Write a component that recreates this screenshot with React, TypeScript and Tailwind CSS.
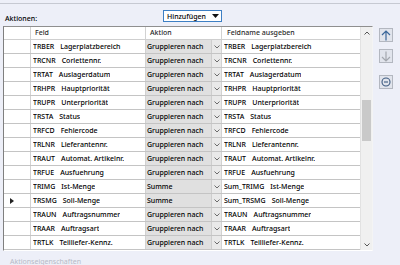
import React from 'react';

type Row = {
  feld: [string, string];
  aktion: string;
  ausgabe: [string, string];
  current?: boolean;
};

const rows: Row[] = [
  { feld: ['TRBER', 'Lagerplatzbereich'], aktion: 'Gruppieren nach', ausgabe: ['TRBER', 'Lagerplatzbereich'] },
  { feld: ['TRCNR', 'Corlettennr.'], aktion: 'Gruppieren nach', ausgabe: ['TRCNR', 'Corlettennr.'] },
  { feld: ['TRTAT', 'Auslagerdatum'], aktion: 'Gruppieren nach', ausgabe: ['TRTAT', 'Auslagerdatum'] },
  { feld: ['TRHPR', 'Hauptpriorität'], aktion: 'Gruppieren nach', ausgabe: ['TRHPR', 'Hauptpriorität'] },
  { feld: ['TRUPR', 'Unterpriorität'], aktion: 'Gruppieren nach', ausgabe: ['TRUPR', 'Unterpriorität'] },
  { feld: ['TRSTA', 'Status'], aktion: 'Gruppieren nach', ausgabe: ['TRSTA', 'Status'] },
  { feld: ['TRFCD', 'Fehlercode'], aktion: 'Gruppieren nach', ausgabe: ['TRFCD', 'Fehlercode'] },
  { feld: ['TRLNR', 'Lieferantennr.'], aktion: 'Gruppieren nach', ausgabe: ['TRLNR', 'Lieferantennr.'] },
  { feld: ['TRAUT', 'Automat. Artikelnr.'], aktion: 'Gruppieren nach', ausgabe: ['TRAUT', 'Automat. Artikelnr.'] },
  { feld: ['TRFUE', 'Ausfuehrung'], aktion: 'Gruppieren nach', ausgabe: ['TRFUE', 'Ausfuehrung'] },
  { feld: ['TRIMG', 'Ist-Menge'], aktion: 'Summe', ausgabe: ['Sum_TRIMG', 'Ist-Menge'] },
  { feld: ['TRSMG', 'Soll-Menge'], aktion: 'Summe', ausgabe: ['Sum_TRSMG', 'Soll-Menge'], current: true },
  { feld: ['TRAUN', 'Auftragsnummer'], aktion: 'Gruppieren nach', ausgabe: ['TRAUN', 'Auftragsnummer'] },
  { feld: ['TRAAR', 'Auftragsart'], aktion: 'Gruppieren nach', ausgabe: ['TRAAR', 'Auftragsart'] },
  { feld: ['TRTLK', 'Teilliefer-Kennz.'], aktion: 'Gruppieren nach', ausgabe: ['TRTLK', 'Teilliefer-Kennz.'] },
];

const CodeName = ({ value }: { value: [string, string] }) => (
  <span className="truncate">
    <span>{value[0]}</span>
    <span className="ml-[6px]">{value[1]}</span>
  </span>
);

const Chevron = ({ up, color = '#6b6b6b' }: { up?: boolean; color?: string }) => (
  <svg width="6" height="4" viewBox="0 0 6 4">
    <polyline
      points={up ? '0.5,3.5 3,1 5.5,3.5' : '0.5,0.5 3,3 5.5,0.5'}
      fill="none"
      stroke={color}
      strokeWidth="1"
    />
  </svg>
);

const SideButton = ({ children }: { children: React.ReactNode }) => (
  <div className="flex h-[14px] w-[14px] items-center justify-center border border-[#b3b7c0] bg-[#e1e4ec]">
    {children}
  </div>
);

export default function App() {
  return (
    <div
      className="h-[265px] w-[400px] overflow-hidden bg-[#edeff8] text-[7px] font-medium text-black"
      style={{ fontFamily: '"Noto Sans", "Liberation Sans", sans-serif' }}
    >
      <div className="h-[3px]" />
      <div className="border-t border-[#c6c9d2]" />

      {/* Toolbar */}
      <div className="flex h-[22px]">
        <div className="w-[163px] pl-[5px] pt-[10px] leading-[9px]">Aktionen:</div>
        <button className="mt-[6px] flex h-[12px] w-[59px] items-center border border-[#3d7fc4] bg-white pl-[3px] leading-none">
          <span>Hinzufügen</span>
          <svg className="ml-[6px]" width="7" height="4" viewBox="0 0 7 4">
            <polygon points="0,0 7,0 3.5,4" fill="#111" />
          </svg>
        </button>
      </div>

      {/* Grid + side buttons */}
      <div className="flex">
        <div className="ml-[3px] flex w-[370px] border-b border-l border-r border-t border-b-white border-l-[#7f7f7f] border-r-[#f4f4f4] border-t-[#8f8f8f] bg-white">
          <div className="flex-1">
            {/* Header */}
            <div className="flex h-[13px] border-b border-[#cfcfcf] leading-[12px] text-[#2a2a2a]">
              <div className="w-[27px] border-r border-[#d2d2d2]" />
              <div className="w-[115px] border-r border-[#d2d2d2] pl-[4px]">Feld</div>
              <div className="w-[76px] border-r border-[#d2d2d2] pl-[4px]">Aktion</div>
              <div className="w-[138px] pl-[5px]">Feldname ausgeben</div>
            </div>

            {/* Rows */}
            {rows.map((row) => (
              <div key={row.feld[0]} className="flex h-[14px] border-b border-[#c4c4c4] leading-[13px]">
                <div className="flex w-[27px] items-center border-r border-[#d2d2d2] pl-[6px]">
                  {row.current && (
                    <svg width="4" height="6" viewBox="0 0 4 6">
                      <polygon points="0,0 4,3 0,6" fill="#222" />
                    </svg>
                  )}
                </div>
                <div className="flex w-[115px] border-r border-[#d2d2d2] pl-[2px]">
                  <CodeName value={row.feld} />
                </div>
                <div className="flex w-[76px] border-r border-[#d2d2d2] bg-[#e0e0e0]">
                  <div className="flex-1 truncate pl-[1px]">{row.aktion}</div>
                  <div className="flex w-[10px] items-center justify-center border-l border-[#cdcdcd] bg-[#e9e9e9]">
                    <Chevron />
                  </div>
                </div>
                <div className="flex w-[138px] pl-[2px]">
                  <CodeName value={row.ausgabe} />
                </div>
              </div>
            ))}
          </div>

          {/* Scrollbar */}
          <div className="flex w-[12px] flex-col border-l border-[#e2e2e2] bg-[#f0f0f0]">
            <div className="flex h-[11px] items-center justify-center pt-[1px]">
              <Chevron up color="#555" />
            </div>
            <div className="h-[62px]" />
            <div className="mx-[1px] h-[41px] bg-[#c9c9c9]" />
            <div className="flex-1" />
            <div className="flex h-[11px] items-center justify-center">
              <Chevron color="#555" />
            </div>
          </div>
        </div>

        {/* Side buttons */}
        <div className="ml-[6px] flex flex-col pt-[2px]">
          <SideButton>
            <svg width="10" height="11" viewBox="0 0 10 11">
              <path d="M5 10.5V1M1 5L5 1l4 4" fill="none" stroke="#3b679a" strokeWidth="1.2" />
            </svg>
          </SideButton>
          <div className="h-[7px]" />
          <SideButton>
            <svg width="10" height="11" viewBox="0 0 10 11">
              <path d="M5 0.5V10M1 6l4 4 4-4" fill="none" stroke="#a3a7ae" strokeWidth="1.2" />
            </svg>
          </SideButton>
          <div className="h-[12px]" />
          <SideButton>
            <svg width="10" height="10" viewBox="0 0 10 10">
              <circle cx="5" cy="5" r="4" fill="none" stroke="#3d5a80" strokeWidth="1.1" />
              <path d="M3 5h4" stroke="#3d5a80" strokeWidth="1.1" />
            </svg>
          </SideButton>
        </div>
      </div>

      {/* Properties group title, partly below the window edge as in the original */}
      <div className="pl-[10px] pt-[6px] leading-[9px] font-normal text-[#b6bac6]">Aktionseigenschaften</div>
    </div>
  );
}
